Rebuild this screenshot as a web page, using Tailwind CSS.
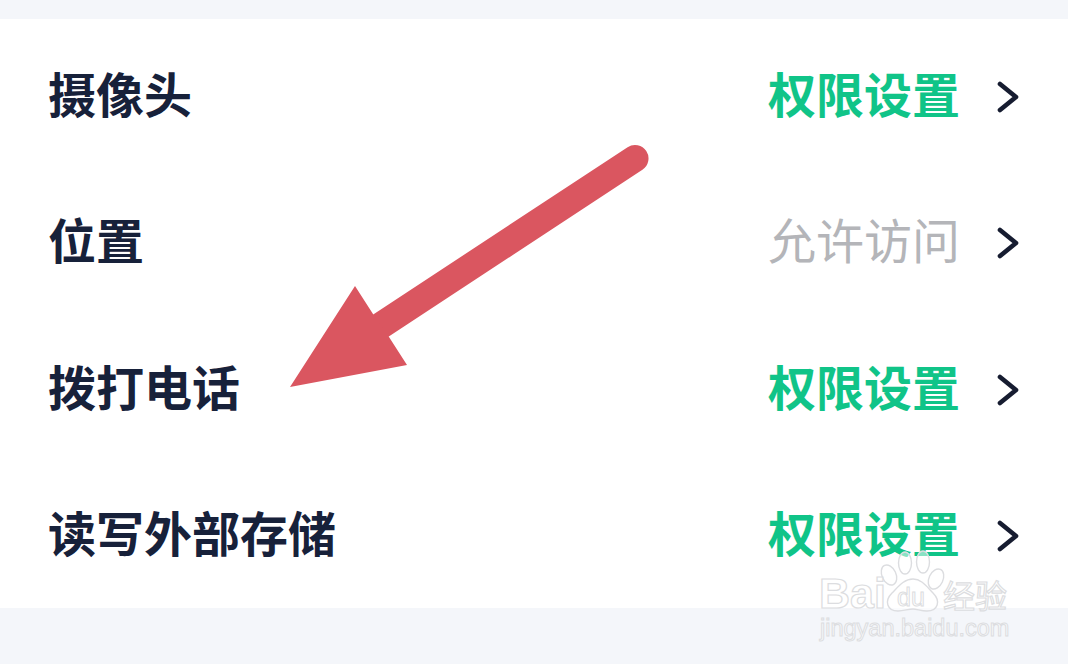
<!DOCTYPE html>
<html lang="zh-CN">
<head>
    <meta charset="UTF-8">
    <title>权限设置</title>
    <script src="https://cdn.jsdelivr.net/npm/@tailwindcss/browser@4"></script>
</head>
<body class="m-0">
    <div class="relative w-[1068px] h-[664px] overflow-hidden bg-[#f4f6fa] pt-[19px] font-['Noto_Sans_CJK_SC','Liberation_Sans',sans-serif]">
        <!-- permission list -->
        <div class="bg-white h-[589px] pt-[3px]">
            <div class="h-[146.5px] pl-[48px] pr-[48px] flex items-center justify-between">
                <span class="mb-[7px] text-[48px] leading-none font-bold text-[#17213a]">摄像头</span>
                <div class="flex items-center gap-[36px]">
                    <span class="mb-[7px] text-[48px] leading-none font-bold text-[#10c488]">权限设置</span>
                    <svg class="mt-[3px] w-[24px] h-[32px]" viewBox="0 0 24 32" fill="none" stroke="#161c30" stroke-width="4.6" stroke-linecap="round" stroke-linejoin="round"><path d="M4 3 L20 16 L4 29"/></svg>
                </div>
            </div>
            <div class="h-[146.5px] pl-[48px] pr-[48px] flex items-center justify-between">
                <span class="mb-[7px] text-[48px] leading-none font-bold text-[#17213a]">位置</span>
                <div class="flex items-center gap-[36px]">
                    <span class="mb-[7px] text-[48px] leading-none text-[#b4b5b9]">允许访问</span>
                    <svg class="mt-[3px] w-[24px] h-[32px]" viewBox="0 0 24 32" fill="none" stroke="#161c30" stroke-width="4.6" stroke-linecap="round" stroke-linejoin="round"><path d="M4 3 L20 16 L4 29"/></svg>
                </div>
            </div>
            <div class="h-[146.5px] pl-[48px] pr-[48px] flex items-center justify-between">
                <span class="mb-[7px] text-[48px] leading-none font-bold text-[#17213a]">拨打电话</span>
                <div class="flex items-center gap-[36px]">
                    <span class="mb-[7px] text-[48px] leading-none font-bold text-[#10c488]">权限设置</span>
                    <svg class="mt-[3px] w-[24px] h-[32px]" viewBox="0 0 24 32" fill="none" stroke="#161c30" stroke-width="4.6" stroke-linecap="round" stroke-linejoin="round"><path d="M4 3 L20 16 L4 29"/></svg>
                </div>
            </div>
            <div class="h-[146.5px] pl-[48px] pr-[48px] flex items-center justify-between">
                <span class="mb-[7px] text-[48px] leading-none font-bold text-[#17213a]">读写外部存储</span>
                <div class="flex items-center gap-[36px]">
                    <span class="mb-[7px] text-[48px] leading-none font-bold text-[#10c488]">权限设置</span>
                    <svg class="mt-[3px] w-[24px] h-[32px]" viewBox="0 0 24 32" fill="none" stroke="#161c30" stroke-width="4.6" stroke-linecap="round" stroke-linejoin="round"><path d="M4 3 L20 16 L4 29"/></svg>
                </div>
            </div>
        </div>

        <!-- red annotation arrow -->
        <svg class="absolute left-0 top-0 w-[1068px] h-[664px] pointer-events-none" viewBox="0 0 1068 664">
            <line x1="381" y1="325.5" x2="635" y2="158.5" stroke="#da5660" stroke-width="27" stroke-linecap="round"/>
            <polygon points="290,387 355,286 373,314 389,337 407,365" fill="#da5660"/>
        </svg>

        <!-- baidu watermark -->
        <svg class="absolute left-0 top-0 w-[1068px] h-[664px] pointer-events-none" viewBox="0 0 1068 664" fill="#ffffff" fill-opacity="0.5" stroke="#dcdde0" stroke-width="1.4">
            <ellipse cx="889" cy="575" rx="7" ry="10.5" transform="rotate(-25 889 575)"/>
            <ellipse cx="905" cy="563" rx="6.5" ry="11"/>
            <ellipse cx="923" cy="562" rx="6.5" ry="11"/>
            <ellipse cx="936" cy="579" rx="7" ry="10.5" transform="rotate(25 936 579)"/>
            <path d="M913 579 C922 579 927 587 933 593 C941 601 938 611 927 611 C921 611 917 609 913 609 C908 609 904 611 898 611 C887 611 884 601 892 593 C898 587 904 579 913 579 Z"/>
        </svg>
        <div class="absolute left-[819px] top-[570px] text-[43px] leading-[46px] font-bold font-['Liberation_Sans',sans-serif] text-white/50 [-webkit-text-stroke:1.2px_#dcdde0]">Bai</div>
        <div class="absolute left-[897px] top-[584px] text-[25px] leading-[26px] font-['Liberation_Sans',sans-serif] text-white/50 [-webkit-text-stroke:1px_#dcdde0]">du</div>
        <div class="absolute left-[943px] top-[578px] text-[32px] leading-[32px] text-white/50 [-webkit-text-stroke:1.2px_#dcdde0]">经验</div>
        <div class="absolute left-[820px] top-[616px] text-[23.5px] leading-[24px] font-['Liberation_Sans',sans-serif] text-white/50 [-webkit-text-stroke:1px_#dcdde0]">jingyan.baidu.com</div>
    </div>
</body>
</html>
